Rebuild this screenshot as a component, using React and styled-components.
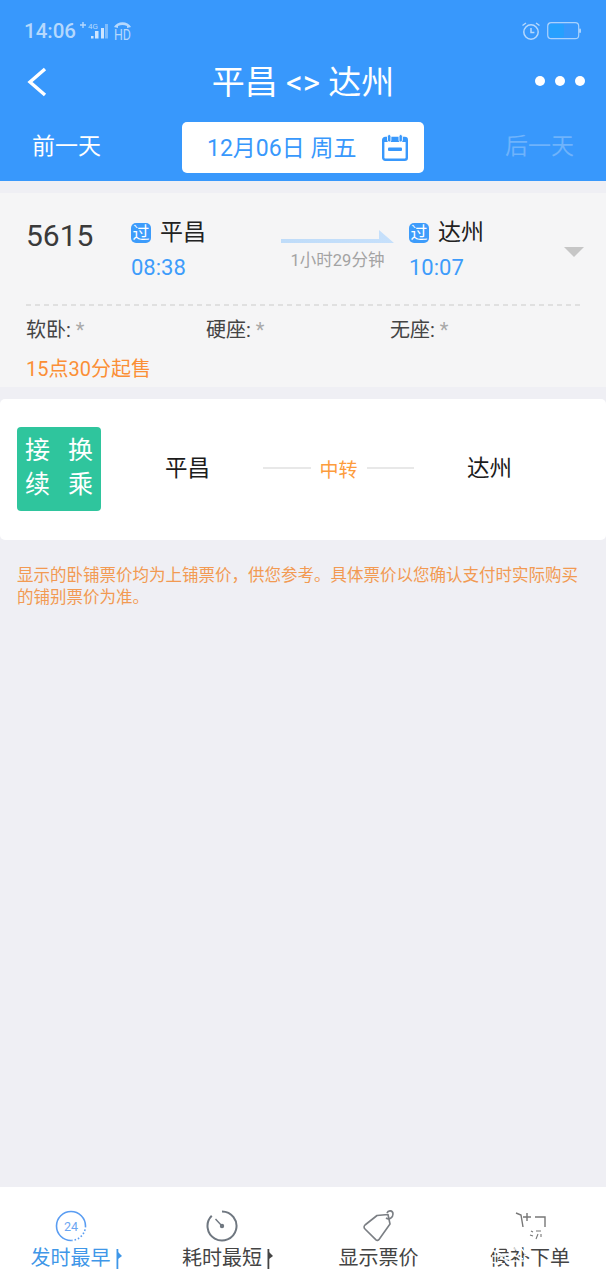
import React from 'react';
import styled, { createGlobalStyle } from 'styled-components';

const CJK = `"Roboto", "Noto Sans CJK SC", sans-serif`;

const GlobalStyle = createGlobalStyle`
  html, body {
    margin: 0;
    padding: 0;
    background: #efeff4;
    font-family: ${CJK};
  }
  * { box-sizing: border-box; }
`;

const Page = styled.div`
  width: 606px;
  height: 1280px;
  display: flex;
  flex-direction: column;
  background: #efeff4;
  overflow: hidden;
`;

const Header = styled.header`
  height: 181px;
  background: #3898fc;
  display: flex;
  flex-direction: column;
  flex-shrink: 0;
`;

const StatusBar = styled.div`
  height: 60px;
  padding: 20px 25px 0 24px;
  display: flex;
  justify-content: space-between;
  align-items: flex-start;
`;

const StatusGroup = styled.div`
  display: flex;
  align-items: center;
  gap: ${p => p.$gap || 4}px;
  height: 22px;
`;

const Clock = styled.span`
  font-size: 20.5px;
  font-weight: 500;
  color: #b5d8fd;
  line-height: 22px;
`;

const TitleRow = styled.div`
  height: 44px;
  display: flex;
  align-items: center;
  justify-content: space-between;
  padding: 0 21px 0 27px;
`;

const Title = styled.h1`
  margin: 2px 0 0;
  font-size: 33px;
  font-weight: 400;
  color: #fff;
  line-height: 44px;
  position: absolute;
  left: 0;
  width: 606px;
  text-align: center;
  pointer-events: none;
`;

const Dots = styled.div`
  display: flex;
  gap: 10px;
  margin-bottom: 2px;
`;

const Dot = styled.span`
  width: 10px;
  height: 10px;
  border-radius: 50%;
  background: #fff;
`;

const DateRow = styled.div`
  margin-top: 18px;
  height: 51px;
  display: grid;
  grid-template-columns: 134px 242px 1fr;
  padding-left: 48px;
  align-items: center;
`;

const DayLink = styled.span`
  font-size: 23px;
  line-height: 49px;
  margin-bottom: 2px;
  color: ${p => (p.$disabled ? '#6fb3fb' : '#fff')};
  margin-left: ${p => p.$offset || 0}px;
`;

const DateBox = styled.div`
  height: 51px;
  background: #fff;
  border-radius: 5px;
  display: flex;
  align-items: center;
  justify-content: space-between;
  padding: 0 16px 0 25px;
  font-size: 23px;
  color: #3898fc;
`;

const DateText = styled.span`
  margin-bottom: 3px;
`;

const TrainCard = styled.section`
  margin-top: 12px;
  height: 194px;
  background: #f5f5f6;
  padding: 0 25px 0 26px;
  display: flex;
  flex-direction: column;
  flex-shrink: 0;
`;

const TrainMain = styled.div`
  height: 111px;
  display: grid;
  grid-template-columns: 105px 150px 128px 1fr 19px;
`;

const Divider = styled.div`
  height: 2px;
  flex-shrink: 0;
  background: repeating-linear-gradient(90deg, #e0e0e0 0 5px, transparent 5px 9px);
`;

const TrainNo = styled.div`
  font-size: 30px;
  line-height: 38px;
  margin-top: 24px;
  color: #3a3a3a;
`;

const StationCol = styled.div`
  padding-top: 26px;
  display: flex;
  flex-direction: column;
  gap: 7px;
`;

const StationLine = styled.div`
  display: flex;
  align-items: center;
  gap: 9px;
  height: 28px;
`;

const PassBadge = styled.span`
  width: 20px;
  height: 20px;
  border-radius: 5px;
  background: #3d9cfb;
  color: #fff;
  font-size: 17px;
  line-height: 20px;
  text-align: center;
`;

const StationName = styled.span`
  font-size: 23px;
  color: #222;
  line-height: 28px;
`;

const Time = styled.span`
  font-size: 22px;
  color: #3d9cfb;
  line-height: 28px;
`;

const DurationCol = styled.div`
  padding-top: 36px;
  display: flex;
  flex-direction: column;
  align-items: center;
  width: 113px;
`;

const Duration = styled.span`
  font-size: 16.5px;
  line-height: 20px;
  margin-top: 6px;
  color: #a3a3a3;
  white-space: nowrap;
`;

const Chevron = styled.span`
  width: 0;
  height: 0;
  margin: 54px 0 0 2px;
  border-left: 10px solid transparent;
  border-right: 10px solid transparent;
  border-top: 10px solid #c6c6c6;
`;

const SeatRow = styled.div`
  margin-top: 5px;
  height: 34px;
  display: grid;
  grid-template-columns: 180px 184px 1fr;
  align-items: center;
`;

const Seat = styled.span`
  font-size: 20px;
  color: #444;
  white-space: nowrap;
`;

const Star = styled.span`
  color: #a9a9a9;
`;

const SaleNote = styled.div`
  margin-top: 10px;
  font-size: 20px;
  line-height: 28px;
  color: #fb8f36;
`;

const TransferCard = styled.section`
  margin-top: 12px;
  height: 141px;
  background: #fff;
  border-radius: 5px;
  padding: 28px 0 0 17px;
  display: grid;
  grid-template-columns: 84px 64px 98px 151px 53px 1fr;
  grid-template-rows: 82px;
  flex-shrink: 0;
`;

const TransferBadge = styled.div`
  width: 84px;
  height: 84px;
  border-radius: 4px;
  background: #2fc59d;
  color: #fff;
  font-size: 25px;
  line-height: 34px;
  padding: 7px 8px 0;
  display: grid;
  grid-template-columns: 1fr 1fr;
  grid-auto-rows: 34px;
  column-gap: 18px;
  text-align: center;
`;

const TransferCity = styled.div`
  grid-column: ${p => p.$col};
  font-size: 22.5px;
  line-height: 82px;
  color: #1c1c1c;
  white-space: nowrap;
`;

const TransferMid = styled.div`
  grid-column: 4;
  height: 82px;
  display: flex;
  align-items: center;
  gap: 9px;
  font-size: 19px;
  color: #fd9c3c;
`;

const MidLine = styled.span`
  flex: 1;
  height: 2px;
  background: #e8e8e8;
`;

const FareNote = styled.p`
  margin: 25px 0 0;
  padding: 0 17px;
  font-size: 16.5px;
  line-height: 22px;
  color: #f29a52;
`;

const Spacer = styled.div`
  flex: 1;
`;

const Footer = styled.footer`
  height: 93px;
  background: #fff;
  display: grid;
  grid-template-columns: 141px 162px 151px 152px;
  flex-shrink: 0;
  position: relative;
`;

const Tab = styled.div`
  padding-top: 22px;
  display: flex;
  flex-direction: column;
  align-items: center;
  color: ${p => (p.$active ? '#3f97e8' : '#444')};
`;

const TabIcon = styled.div`
  height: 34px;
  display: flex;
  align-items: center;
  justify-content: center;
`;

const TabLabel = styled.div`
  margin-top: 1px;
  font-size: 20px;
  line-height: 28px;
  white-space: nowrap;
  position: relative;
`;

const SortMark = styled.svg`
  position: absolute;
  left: calc(100% + 5px);
  top: 5px;
  width: 6px;
  height: 20px;
`;

// the screenshot's faint watermark breaks up the last label with white strokes
const WatermarkStrokes = styled.svg`
  position: absolute;
  left: 486px;
  top: 40px;
  width: 64px;
  height: 44px;
  pointer-events: none;
`;

function BackIcon() {
  return (
    <svg width="20" height="30" viewBox="0 0 20 30" fill="none">
      <path d="M18 2 L3 15 L18 28" stroke="#fff" strokeWidth="3.4" />
    </svg>
  );
}

function SignalIcons() {
  return (
    <svg width="54" height="22" viewBox="0 0 54 22" fill="none">
      <path d="M0 5h6M3 2v6" stroke="#b5d8fd" strokeWidth="1.4" />
      <text x="8" y="9" fontSize="8" fill="#b5d8fd" fontFamily="Roboto">4G</text>
      <rect x="11" y="16" width="2.5" height="2.5" fill="#cfe5fe" />
      <rect x="15" y="11" width="3.5" height="7.5" fill="#cfe5fe" />
      <rect x="21" y="8" width="3" height="10.5" fill="#cfe5fe" />
      <rect x="25" y="4" width="3" height="14.5" fill="#7fbcfc" />
      <path d="M34 7c3-6.5 14-6.5 17 0l-4 1v-2c-3-1.5-6-1.5-9 0v2z" fill="#b5d8fd" />
      <text x="34" y="20" fontSize="14" fill="#b5d8fd" fontFamily="Roboto" textLength="17" lengthAdjust="spacingAndGlyphs">HD</text>
    </svg>
  );
}

function AlarmIcon() {
  return (
    <svg width="20" height="20" viewBox="0 0 20 20" fill="none" stroke="#b5d8fd" strokeWidth="1.5">
      <circle cx="10" cy="11" r="7.2" />
      <path d="M10 7v4.4h3.4" />
      <path d="M1.5 4.5 5 2M18.5 4.5 15 2" />
    </svg>
  );
}

function BatteryIcon() {
  return (
    <svg width="34" height="18" viewBox="0 0 34 18" fill="none">
      <rect x="0.7" y="0.7" width="31" height="16" rx="3.5" stroke="#a9d2fd" strokeWidth="1.2" />
      <rect x="2" y="2" width="15" height="13.6" rx="2" fill="#26a0fe" />
      <rect x="32" y="6.5" width="2" height="4.5" rx="1" fill="#a9d2fd" />
    </svg>
  );
}

function CalendarIcon() {
  return (
    <svg width="26" height="27" viewBox="0 0 26 27" fill="none">
      <rect x="1.2" y="4" width="23.6" height="21.8" rx="2" stroke="#3898fc" strokeWidth="2.4" />
      <rect x="1.2" y="4" width="23.6" height="4" fill="#3898fc" />
      <rect x="5.5" y="0.5" width="3.4" height="7.5" rx="1.7" fill="#3898fc" stroke="#fff" strokeWidth="0.9" />
      <rect x="17" y="0.5" width="3.4" height="7.5" rx="1.7" fill="#3898fc" stroke="#fff" strokeWidth="0.9" />
      <rect x="6" y="13.5" width="14" height="3.4" rx="1" fill="#3898fc" />
    </svg>
  );
}

function DurationArrow() {
  return (
    <svg width="113" height="16" viewBox="0 0 113 16">
      <defs>
        <linearGradient id="arrowFade" x1="0" x2="1" y1="0" y2="0">
          <stop offset="0" stopColor="#bfdcf9" />
          <stop offset="1" stopColor="#c6e0fb" />
        </linearGradient>
      </defs>
      <path d="M0 10h98V1l15 13H0z" fill="url(#arrowFade)" />
    </svg>
  );
}

function EarlyIcon() {
  return (
    <svg width="32" height="32" viewBox="0 0 32 32" fill="none">
      <path d="M30.5 16A14.5 14.5 0 1 0 16 30.5" stroke="#5a9df2" strokeWidth="1.6" />
      <path d="M30.5 16A14.5 14.5 0 0 1 16 30.5" stroke="#5a9df2" strokeWidth="1.6" strokeDasharray="1.5 2" />
      <text x="16" y="20.5" textAnchor="middle" fontSize="12.5" fill="#6ba6f2" fontFamily="Roboto">24</text>
    </svg>
  );
}

function TimerIcon() {
  return (
    <svg width="32" height="32" viewBox="0 0 32 32" fill="none">
      <path d="M16 1.5A14.5 14.5 0 1 1 5.75 5.75" stroke="#6f7780" strokeWidth="2" />
      <path d="M9.5 9 16 16" stroke="#6f7780" strokeWidth="1.4" />
      <circle cx="16" cy="16" r="2.2" fill="#6f7780" />
    </svg>
  );
}

function TagIcon() {
  return (
    <svg width="34" height="32" viewBox="0 0 34 32" fill="none" stroke="#7b7f84" strokeWidth="1.6">
      <path d="M3 15 15 5.5 26 4.5 28 14 17 29.5a2 2 0 0 1-3 .4L3 19a2.6 2.6 0 0 1 0-4z" strokeLinejoin="round" />
      <path d="M24 8c3 2 7 0 7-4s-5-4-6-1" />
    </svg>
  );
}

function CartIcon() {
  return (
    <svg width="32" height="32" viewBox="0 0 32 32" fill="none" stroke="#777" strokeWidth="1.4">
      <path d="M2 3l5 2 2 12" />
      <path d="M9 7h8M13 3v8" />
      <path d="M21 7h10v10" />
      <path d="M17 21l2 1M16 25l3 1M22 21h5M24 24l-2 5M27 24v3" strokeWidth="1.1" />
    </svg>
  );
}

function Sort({ color }) {
  return (
    <SortMark viewBox="0 0 6 20">
      <path d="M1.4 0v20" stroke={color} strokeWidth="1.8" />
      <path d="M2 3l4 4-4 3z" fill={color} />
    </SortMark>
  );
}

function Station({ name, time }) {
  return (
    <StationCol>
      <StationLine>
        <PassBadge>过</PassBadge>
        <StationName>{name}</StationName>
      </StationLine>
      <Time>{time}</Time>
    </StationCol>
  );
}

export default function App() {
  return (
    <>
      <GlobalStyle />
      <Page>
        <Header>
          <StatusBar>
            <StatusGroup>
              <Clock>14:06</Clock>
              <SignalIcons />
            </StatusGroup>
            <StatusGroup $gap={6}>
              <AlarmIcon />
              <BatteryIcon />
            </StatusGroup>
          </StatusBar>
          <TitleRow>
            <BackIcon />
            <Title>平昌 &lt;&gt; 达州</Title>
            <Dots>
              <Dot />
              <Dot />
              <Dot />
            </Dots>
          </TitleRow>
          <DateRow>
            <DayLink $offset={-16}>前一天</DayLink>
            <DateBox>
              <DateText>12月06日 周五</DateText>
              <CalendarIcon />
            </DateBox>
            <DayLink $disabled $offset={81}>后一天</DayLink>
          </DateRow>
        </Header>

        <TrainCard>
          <TrainMain>
            <TrainNo>5615</TrainNo>
            <Station name="平昌" time="08:38" />
            <DurationCol>
              <DurationArrow />
              <Duration>1小时29分钟</Duration>
            </DurationCol>
            <Station name="达州" time="10:07" />
            <Chevron />
          </TrainMain>
          <Divider />
          <SeatRow>
            <Seat>软卧: <Star>*</Star></Seat>
            <Seat>硬座: <Star>*</Star></Seat>
            <Seat>无座: <Star>*</Star></Seat>
          </SeatRow>
          <SaleNote>15点30分起售</SaleNote>
        </TrainCard>

        <TransferCard>
          <TransferBadge>
            <span>接</span>
            <span>换</span>
            <span>续</span>
            <span>乘</span>
          </TransferBadge>
          <TransferCity $col={3}>平昌</TransferCity>
          <TransferMid>
            <MidLine />
            <span>中转</span>
            <MidLine />
          </TransferMid>
          <TransferCity $col={6}>达州</TransferCity>
        </TransferCard>

        <FareNote>显示的卧铺票价均为上铺票价，供您参考。具体票价以您确认支付时实际购买的铺别票价为准。</FareNote>

        <Spacer />

        <Footer>
          <Tab $active>
            <TabIcon><EarlyIcon /></TabIcon>
            <TabLabel>发时最早<Sort color="#3f97e8" /></TabLabel>
          </Tab>
          <Tab>
            <TabIcon><TimerIcon /></TabIcon>
            <TabLabel>耗时最短<Sort color="#444" /></TabLabel>
          </Tab>
          <Tab>
            <TabIcon><TagIcon /></TabIcon>
            <TabLabel>显示票价</TabLabel>
          </Tab>
          <Tab>
            <TabIcon><CartIcon /></TabIcon>
            <TabLabel>候补下单</TabLabel>
          </Tab>
          <WatermarkStrokes viewBox="0 0 64 44" fill="none" stroke="#fff" strokeWidth="1.4">
            <path d="M4 22l12 6M6 29h14M3 35l16 2M20 20l5 8M14 31l12 5M24 22h12M27 28l10 4M25 34h14M34 20l5 6M38 28l6 1" />
          </WatermarkStrokes>
        </Footer>
      </Page>
    </>
  );
}
